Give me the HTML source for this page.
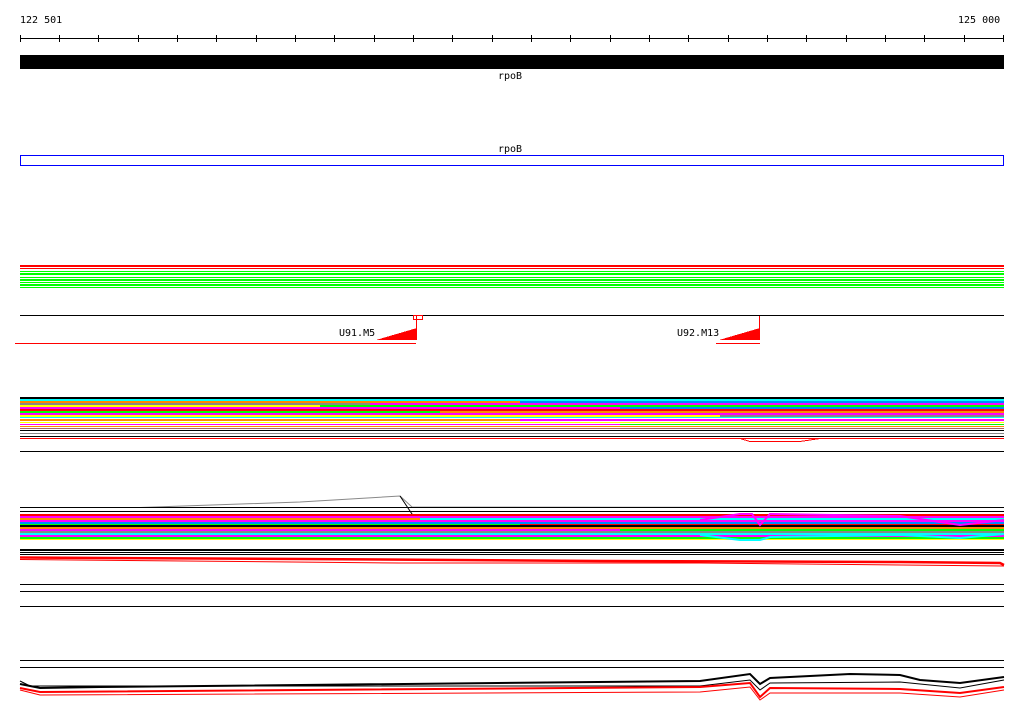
<!DOCTYPE html>
<html><head><meta charset="utf-8"><style>
html,body{margin:0;padding:0;background:#fff;width:1024px;height:714px;overflow:hidden}
svg{display:block}
text{font-family:"DejaVu Sans Mono","Liberation Mono",monospace;font-size:10px;fill:#000}
</style></head><body>
<svg width="1024" height="714" viewBox="0 0 1024 714" shape-rendering="crispEdges">
<text x="20" y="23">122 501</text>
<text x="958" y="23">125 000</text>
<rect x="20" y="38" width="984" height="1" fill="#000"/>
<g fill="#000">
<rect x="20" y="35" width="1" height="7"/><rect x="59" y="35" width="1" height="7"/><rect x="98" y="35" width="1" height="7"/><rect x="138" y="35" width="1" height="7"/><rect x="177" y="35" width="1" height="7"/><rect x="216" y="35" width="1" height="7"/><rect x="256" y="35" width="1" height="7"/><rect x="295" y="35" width="1" height="7"/><rect x="334" y="35" width="1" height="7"/><rect x="374" y="35" width="1" height="7"/><rect x="413" y="35" width="1" height="7"/><rect x="452" y="35" width="1" height="7"/><rect x="492" y="35" width="1" height="7"/><rect x="531" y="35" width="1" height="7"/><rect x="570" y="35" width="1" height="7"/><rect x="610" y="35" width="1" height="7"/><rect x="649" y="35" width="1" height="7"/><rect x="688" y="35" width="1" height="7"/><rect x="728" y="35" width="1" height="7"/><rect x="767" y="35" width="1" height="7"/><rect x="806" y="35" width="1" height="7"/><rect x="846" y="35" width="1" height="7"/><rect x="885" y="35" width="1" height="7"/><rect x="924" y="35" width="1" height="7"/><rect x="964" y="35" width="1" height="7"/><rect x="1003" y="35" width="1" height="7"/>
</g>
<rect x="20" y="55" width="984" height="14" fill="#000"/>
<text x="498" y="79">rpoB</text>
<text x="498" y="152">rpoB</text>
<rect x="20" y="155" width="984" height="1" fill="#00f"/>
<rect x="20" y="165" width="984" height="1" fill="#00f"/>
<rect x="20" y="155" width="1" height="11" fill="#00f"/>
<rect x="1003" y="155" width="1" height="11" fill="#00f"/>
<g>
<rect x="20" y="265" width="984" height="2" fill="#f00"/>
<rect x="20" y="268" width="984" height="1" fill="#f00"/>
<rect x="20" y="271" width="984" height="1" fill="#0f0"/>
<rect x="20" y="273" width="984" height="2" fill="#0f0"/>
<rect x="20" y="277" width="984" height="1" fill="#0f0"/>
<rect x="20" y="279" width="984" height="2" fill="#0f0"/>
<rect x="20" y="282" width="984" height="1" fill="#0f0"/>
<rect x="20" y="284" width="984" height="2" fill="#0f0"/>
<rect x="20" y="287" width="984" height="1" fill="#0f0"/>
</g>
<rect x="20" y="315" width="984" height="1" fill="#000"/>
<rect x="413.5" y="315.5" width="9" height="4" fill="none" stroke="#f00"/>
<rect x="416" y="316" width="1" height="24" fill="#f00"/>
<polygon points="376,340 417,328 417,340" fill="#f00"/>
<text x="339" y="336">U91.M5</text>
<rect x="15" y="343" width="401" height="1" fill="#f00"/>
<rect x="759" y="316" width="1" height="24" fill="#f00"/>
<polygon points="719,340 760,328 760,340" fill="#f00"/>
<text x="677" y="336">U92.M13</text>
<rect x="716" y="343" width="44" height="1" fill="#f00"/>

<!-- band 1 -->
<g>
<rect x="20" y="397" width="984" height="2" fill="#000"/>
<rect x="20" y="399" width="984" height="2" fill="#0ff"/>
<rect x="20" y="401" width="500" height="2" fill="#f80"/><rect x="520" y="401" width="484" height="2" fill="#08f"/>
<rect x="20" y="403" width="350" height="2" fill="#888"/><rect x="370" y="403" width="634" height="2" fill="#f0f"/>
<rect x="20" y="405" width="300" height="2" fill="#ff0"/><rect x="320" y="405" width="684" height="2" fill="#0f0"/>
<rect x="20" y="407" width="600" height="2" fill="#f0f"/><rect x="620" y="407" width="384" height="2" fill="#08f"/>
<rect x="20" y="409" width="984" height="2" fill="#f00"/>
<rect x="20" y="411" width="420" height="2" fill="#0f0"/><rect x="440" y="411" width="564" height="2" fill="#f80"/>
<rect x="20" y="413" width="984" height="2" fill="#f0f"/>
<rect x="20" y="415" width="700" height="2" fill="#ff0"/><rect x="720" y="415" width="284" height="2" fill="#888"/>
<rect x="20" y="417" width="984" height="1" fill="#0ff"/>
<rect x="20" y="419" width="500" height="2" fill="#f80"/><rect x="520" y="419" width="484" height="2" fill="#f0f"/>
<rect x="20" y="422" width="984" height="1" fill="#ff0"/>
<rect x="20" y="424" width="600" height="1" fill="#f0f"/><rect x="620" y="424" width="384" height="1" fill="#0f0"/>
<rect x="20" y="426" width="984" height="1" fill="#f80"/>
<rect x="20" y="428" width="984" height="1" fill="#a66"/>
<rect x="20" y="430" width="984" height="1" fill="#000"/>
<rect x="20" y="433" width="984" height="1" fill="#888"/>
<rect x="20" y="436" width="984" height="1" fill="#000"/>
<rect x="20" y="438" width="984" height="1" fill="#f00"/>
<rect x="20" y="451" width="984" height="1" fill="#000"/>
</g>
<polyline points="740,438.5 750,441.5 800,441.5 820,438.5" fill="none" stroke="#f00"/>

<!-- band 2 -->
<polyline points="20,507.5 140,507.5 300,502 400,496 412,507 1004,507.5" fill="none" stroke="#888" shape-rendering="auto"/>
<polyline points="400,496 416,520" fill="none" stroke="#000" shape-rendering="auto"/>
<g>
<rect x="20" y="507" width="984" height="1" fill="#000"/>
<rect x="20" y="511" width="984" height="1" fill="#000"/>
<rect x="20" y="514" width="984" height="2" fill="#f00"/>
<rect x="20" y="516" width="984" height="2" fill="#f0f"/>
<rect x="20" y="518" width="400" height="2" fill="#f80"/><rect x="420" y="518" width="584" height="2" fill="#0ff"/>
<rect x="20" y="520" width="984" height="2" fill="#f0f"/>
<rect x="20" y="522" width="984" height="2" fill="#08f"/>
<rect x="20" y="524" width="500" height="1" fill="#0f0"/><rect x="520" y="524" width="484" height="1" fill="#f00"/>
<rect x="20" y="525" width="984" height="2" fill="#000"/>
<rect x="20" y="527" width="984" height="2" fill="#f80"/>
<rect x="20" y="529" width="600" height="2" fill="#f0f"/><rect x="620" y="529" width="384" height="2" fill="#0f0"/>
<rect x="20" y="531" width="984" height="2" fill="#888"/>
<rect x="20" y="533" width="984" height="2" fill="#0ff"/>
<rect x="20" y="535" width="984" height="2" fill="#f0f"/>
<rect x="20" y="537" width="984" height="2" fill="#0f0"/>
<rect x="20" y="539" width="984" height="1" fill="#ff0"/>
<rect x="20" y="549" width="984" height="2" fill="#000"/>
<rect x="20" y="552" width="984" height="1" fill="#000"/>
<rect x="20" y="554" width="984" height="1" fill="#000"/>
<rect x="20" y="584" width="984" height="1" fill="#000"/>
<rect x="20" y="591" width="984" height="1" fill="#000"/>
<rect x="20" y="606" width="984" height="1" fill="#000"/>
<rect x="20" y="660" width="984" height="1" fill="#000"/>
<rect x="20" y="667" width="984" height="1" fill="#000"/>
</g>
<g shape-rendering="auto">
<polyline points="700,520 740,514 752,514 760,525 770,514 900,516 960,525 1004,520" fill="none" stroke="#f0f" stroke-width="2"/>
<polyline points="700,535 740,540 752,540 760,540 770,537 900,535 960,538 1004,534" fill="none" stroke="#0ff" stroke-width="2"/>
<polyline points="20,557.5 300,559 600,561 900,562 1000,563 1004,565" fill="none" stroke="#f00" stroke-width="2.5"/>
<polyline points="20,559.5 400,563 700,563 1004,566" fill="none" stroke="#f00"/>
<polyline points="20,684 40,688 100,687 700,681 750,674 760,684 770,678 850,674 900,675 920,680 960,683 1004,677" fill="none" stroke="#000" stroke-width="2"/>
<polyline points="20,681 30,686 700,686 750,680 760,690 770,683 900,682 960,688 1004,680" fill="none" stroke="#000"/>
<polyline points="20,688 40,692 700,687 750,683 760,697 770,688 900,689 960,693 1004,687" fill="none" stroke="#f00" stroke-width="2"/>
<polyline points="20,690 40,695 700,692 750,687 760,700 770,693 900,693 960,697 1004,690" fill="none" stroke="#f00"/>
</g>
</svg>
</body></html>
